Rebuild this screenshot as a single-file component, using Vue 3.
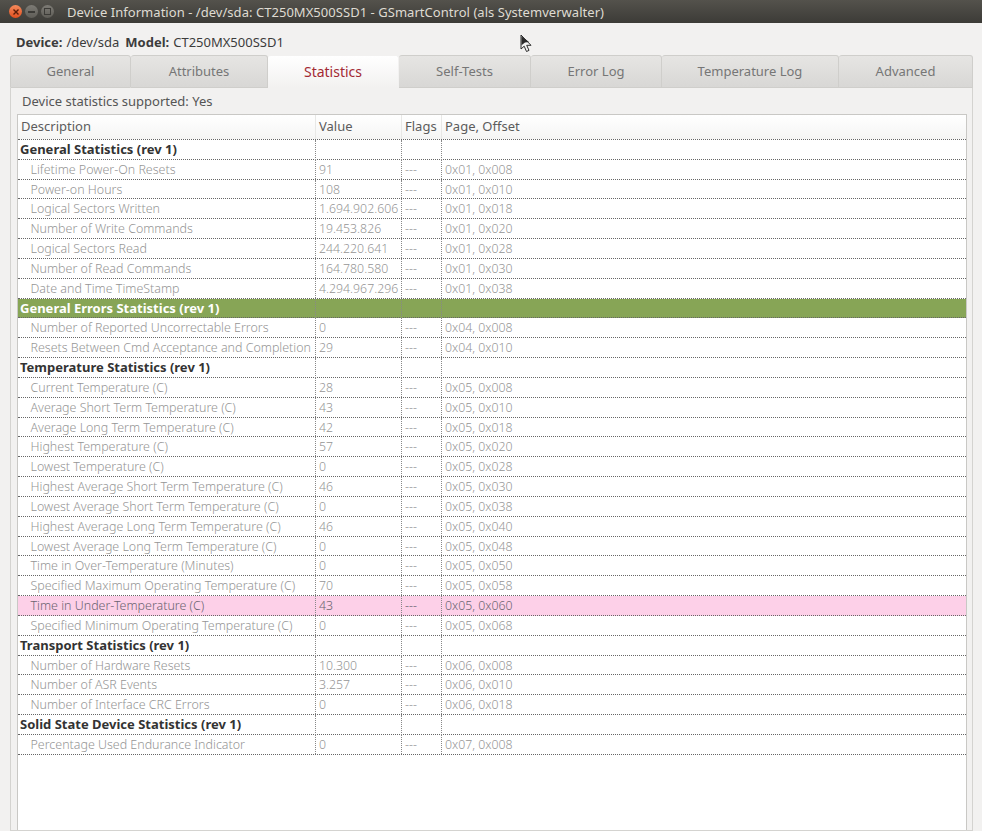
<script setup>
const tabs = [
  { label: 'General', w: 121 },
  { label: 'Attributes', w: 137 },
  { label: 'Statistics', w: 131, active: true },
  { label: 'Self-Tests', w: 132 },
  { label: 'Error Log', w: 131 },
  { label: 'Temperature Log', w: 177 },
  { label: 'Advanced', w: 134 },
]
const g = (name, kind = '') => ({ name, group: true, kind })
const r = (name, value, page, kind = '') => ({ name, value, flags: '---', page, kind })
const rows = [
  g('General Statistics (rev 1)'),
  r('Lifetime Power-On Resets', '91', '0x01, 0x008'),
  r('Power-on Hours', '108', '0x01, 0x010'),
  r('Logical Sectors Written', '1.694.902.606', '0x01, 0x018'),
  r('Number of Write Commands', '19.453.826', '0x01, 0x020'),
  r('Logical Sectors Read', '244.220.641', '0x01, 0x028'),
  r('Number of Read Commands', '164.780.580', '0x01, 0x030'),
  r('Date and Time TimeStamp', '4.294.967.296', '0x01, 0x038'),
  g('General Errors Statistics (rev 1)', 'green'),
  r('Number of Reported Uncorrectable Errors', '0', '0x04, 0x008'),
  r('Resets Between Cmd Acceptance and Completion', '29', '0x04, 0x010'),
  g('Temperature Statistics (rev 1)'),
  r('Current Temperature (C)', '28', '0x05, 0x008'),
  r('Average Short Term Temperature (C)', '43', '0x05, 0x010'),
  r('Average Long Term Temperature (C)', '42', '0x05, 0x018'),
  r('Highest Temperature (C)', '57', '0x05, 0x020'),
  r('Lowest Temperature (C)', '0', '0x05, 0x028'),
  r('Highest Average Short Term Temperature (C)', '46', '0x05, 0x030'),
  r('Lowest Average Short Term Temperature (C)', '0', '0x05, 0x038'),
  r('Highest Average Long Term Temperature (C)', '46', '0x05, 0x040'),
  r('Lowest Average Long Term Temperature (C)', '0', '0x05, 0x048'),
  r('Time in Over-Temperature (Minutes)', '0', '0x05, 0x050'),
  r('Specified Maximum Operating Temperature (C)', '70', '0x05, 0x058'),
  r('Time in Under-Temperature (C)', '43', '0x05, 0x060', 'pink'),
  r('Specified Minimum Operating Temperature (C)', '0', '0x05, 0x068'),
  g('Transport Statistics (rev 1)'),
  r('Number of Hardware Resets', '10.300', '0x06, 0x008'),
  r('Number of ASR Events', '3.257', '0x06, 0x010'),
  r('Number of Interface CRC Errors', '0', '0x06, 0x018'),
  g('Solid State Device Statistics (rev 1)'),
  r('Percentage Used Endurance Indicator', '0', '0x07, 0x008'),
]
</script>

<template>
  <div class="window">
    <header class="titlebar">
      <div class="controls">
        <span class="btn close">
          <svg width="8" height="8" viewBox="0 0 8 8"><path d="M1.5 1.5l5 5M6.5 1.5l-5 5" stroke="#5a1c08" stroke-width="1.4" /></svg>
        </span>
        <span class="btn"><i class="min"></i></span>
        <span class="btn"><i class="max"></i></span>
      </div>
      <span class="title">Device Information - /dev/sda: CT250MX500SSD1 - GSmartControl (als Systemverwalter)</span>
    </header>

    <div class="device">
      <b>Device:</b><span class="devval">/dev/sda</span><b>Model:</b><span>CT250MX500SSD1</span>
    </div>

    <div class="tabs">
      <div
        v-for="t in tabs"
        :key="t.label"
        class="tab"
        :class="{ active: t.active }"
        :style="{ width: t.w + 'px' }"
      >{{ t.label }}</div>
    </div>

    <section class="panel">
      <div class="support">Device statistics supported: Yes</div>
      <div class="table">
        <div class="row head">
          <div class="cell">Description</div>
          <div class="cell">Value</div>
          <div class="cell">Flags</div>
          <div class="cell">Page, Offset</div>
        </div>
        <div
          v-for="row in rows"
          :key="row.name"
          class="row"
          :class="[row.kind, { group: row.group }]"
        >
          <div class="cell name">{{ row.name }}</div>
          <div class="cell">{{ row.value }}</div>
          <div class="cell">{{ row.flags }}</div>
          <div class="cell">{{ row.page }}</div>
        </div>
      </div>
    </section>

    <svg class="cursor" width="14" height="19" viewBox="0 0 14 19">
      <path d="M1 1v14l3.200-2.800 2.300 5.300 2.500-1.100-2.300-5.100h4.300z" fill="#f4f4f4" stroke="#2b2b2b" stroke-width="1" />
      <path d="M1.500 2.200v9l3.500-2.700 4-0.500z" fill="#2b2b2b" />
    </svg>
  </div>
</template>

<style>
html, body { margin: 0; background: #f2f1f0; }
</style>

<style scoped>
.window {
  position: relative;
  width: 982px;
  height: 831px;
  overflow: hidden;
  display: flex;
  flex-direction: column;
  background: #f2f1f0;
  font-family: "Noto Sans", sans-serif;
  font-size: 13px;
  color: #4c4c4c;
}
.titlebar {
  height: 23px;
  flex: none;
  display: flex;
  align-items: center;
  background: linear-gradient(#54524c, #3c3b37);
  color: #dfdbd2;
  font-size: 13px;
}
.controls {
  display: flex;
  gap: 3px;
  margin-left: 9px;
  width: 58px;
}
.btn {
  width: 13px;
  height: 13px;
  border-radius: 50%;
  background: linear-gradient(#7d7b75, #5f5d57);
  display: flex;
  align-items: center;
  justify-content: center;
}
.btn.close { background: linear-gradient(#f58a5c, #e2501f); }
.min { width: 7px; height: 2px; background: #3c3b37; }
.max { width: 5px; height: 5px; border: 1px solid #3c3b37; }
.title { white-space: nowrap; letter-spacing: 0.04px; }
.device {
  height: 32px;
  flex: none;
  box-sizing: border-box;
  padding: 5px 0 0 16px;
  display: flex;
  align-items: center;
  color: #3c3c3c;
}
.device b { margin-right: 4px; }
.devval { margin-right: 6px; }
.tabs {
  display: flex;
  margin-left: 10px;
  height: 33px;
  flex: none;
}
.tab {
  box-sizing: border-box;
  display: flex;
  align-items: center;
  justify-content: center;
  padding-bottom: 2px;
  color: #767676;
  background: linear-gradient(#e6e5e3, #d8d7d5);
  border: 1px solid #cfcecb;
  border-left-width: 0;
  border-radius: 3px 3px 0 0;
}
.tab:first-child { border-left-width: 1px; }
.tab.active {
  background: linear-gradient(#fff, #f2f1f0);
  color: #a32a33;
  border-color: #f2f1f0;
  border-bottom: 0;
  font-size: 14px;
}
.panel {
  flex: 1;
  box-sizing: border-box;
  margin: 0 9px 0 10px;
  padding: 0 5px 0 6px;
  border: 1px solid #d4d3d0;
  border-top: 0;
  display: flex;
  flex-direction: column;
}
.support {
  height: 26px;
  flex: none;
  display: flex;
  align-items: center;
  padding-left: 5px;
  color: #555;
}
.table {
  flex: 1;
  background: #fff;
  border: 1px solid #c9c8c5;
  border-bottom: 0;
}
.row {
  display: grid;
  grid-template-columns: 298px 86px 40px 1fr;
  height: 19.84px;
  box-sizing: border-box;
  border-bottom: 1px dotted #666;
  color: #959595;
  font-size: 12.3px;
  font-weight: 300;
  white-space: nowrap;
}
.row.head {
  height: 25px;
  background: linear-gradient(#fff, #f5f5f4);
  color: #5c5c5c;
  font-size: 13px;
  font-weight: 400;
}
.row.head .cell { border-right: 1px solid #e8e8e6; padding-left: 3px; line-height: 23px; }
.row.head .cell:last-child { border-right: 0; }
.cell {
  box-sizing: border-box;
  padding-left: 3px;
  border-right: 1px dotted #888;
  line-height: 19.84px;
  overflow: hidden;
}
.cell:last-child { border-right: 0; }
.name { padding-left: 12.5px; font-size: 12.45px; }
.group { color: #333; font-weight: 700; font-size: 13px; }
.group .name { padding-left: 2px; overflow: visible; font-size: 13px; }
.green { background: #87a556; color: #fff; }
.pink { background: #fdd0e8; color: #6b6470; }
.cursor {
  position: absolute;
  left: 520px;
  top: 34px;
}
</style>
